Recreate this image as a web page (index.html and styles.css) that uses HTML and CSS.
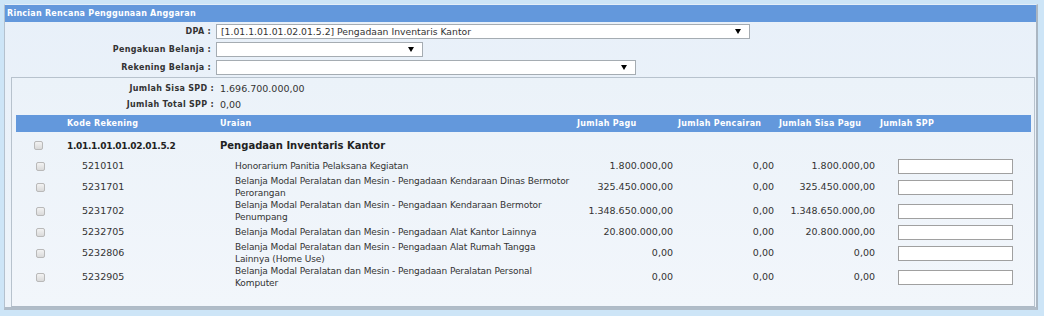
FILE: index.html
```html
<!DOCTYPE html>
<html>
<head>
<meta charset="utf-8">
<title>Rincian Rencana Penggunaan Anggaran</title>
<link rel="stylesheet" href="styles.css">
</head>
<body>
<div class="panel">
  <div class="panel-title">Rincian Rencana Penggunaan Anggaran</div>
  <div class="form">
    <div class="form-row">
      <span class="lbl">DPA :</span>
      <div class="select sel-dpa"><span class="sel-text">[1.01.1.01.01.02.01.5.2] Pengadaan Inventaris Kantor</span><svg class="caret" width="6" height="5" viewBox="0 0 6 5"><polygon points="0,0 6,0 3,5" fill="#000"/></svg></div>
    </div>
    <div class="form-row">
      <span class="lbl">Pengakuan Belanja :</span>
      <div class="select sel-pengakuan"><span class="sel-text"></span><svg class="caret" width="6" height="5" viewBox="0 0 6 5"><polygon points="0,0 6,0 3,5" fill="#000"/></svg></div>
    </div>
    <div class="form-row">
      <span class="lbl">Rekening Belanja :</span>
      <div class="select sel-rekening"><span class="sel-text"></span><svg class="caret" width="6" height="5" viewBox="0 0 6 5"><polygon points="0,0 6,0 3,5" fill="#000"/></svg></div>
    </div>
  </div>
  <div class="box">
    <div class="sum-row"><span class="lbl">Jumlah Sisa SPD :</span><span class="num">1.696.700.000,00</span></div>
    <div class="sum-row"><span class="lbl">Jumlah Total SPP :</span><span class="num">0,00</span></div>
    <table class="grid">
      <colgroup>
        <col class="c-chk"><col class="c-code"><col class="c-uraian"><col class="c-num"><col class="c-num"><col class="c-num"><col class="c-spp">
      </colgroup>
      <thead>
        <tr>
          <th></th>
          <th>Kode Rekening</th>
          <th>Uraian</th>
          <th>Jumlah Pagu</th>
          <th>Jumlah Pencairan</th>
          <th>Jumlah Sisa Pagu</th>
          <th>Jumlah SPP</th>
        </tr>
      </thead>
      <tbody>
        <tr class="group">
          <td><span class="chk chk-group"></span></td>
          <td class="code">1.01.1.01.01.02.01.5.2</td>
          <td class="uraian">Pengadaan Inventaris Kantor</td>
          <td></td><td></td><td></td><td></td>
        </tr>
        <tr class="item">
          <td><span class="chk"></span></td>
          <td class="code">5210101</td>
          <td class="uraian">Honorarium Panitia Pelaksana Kegiatan</td>
          <td class="num">1.800.000,00</td>
          <td class="num">0,00</td>
          <td class="num">1.800.000,00</td>
          <td><span class="spp-input"></span></td>
        </tr>
        <tr class="item">
          <td><span class="chk"></span></td>
          <td class="code">5231701</td>
          <td class="uraian">Belanja Modal Peralatan dan Mesin - Pengadaan Kendaraan Dinas Bermotor Perorangan</td>
          <td class="num">325.450.000,00</td>
          <td class="num">0,00</td>
          <td class="num">325.450.000,00</td>
          <td><span class="spp-input"></span></td>
        </tr>
        <tr class="item">
          <td><span class="chk"></span></td>
          <td class="code">5231702</td>
          <td class="uraian">Belanja Modal Peralatan dan Mesin - Pengadaan Kendaraan Bermotor Penumpang</td>
          <td class="num">1.348.650.000,00</td>
          <td class="num">0,00</td>
          <td class="num">1.348.650.000,00</td>
          <td><span class="spp-input"></span></td>
        </tr>
        <tr class="item">
          <td><span class="chk"></span></td>
          <td class="code">5232705</td>
          <td class="uraian">Belanja Modal Peralatan dan Mesin - Pengadaan Alat Kantor Lainnya</td>
          <td class="num">20.800.000,00</td>
          <td class="num">0,00</td>
          <td class="num">20.800.000,00</td>
          <td><span class="spp-input"></span></td>
        </tr>
        <tr class="item">
          <td><span class="chk"></span></td>
          <td class="code">5232806</td>
          <td class="uraian">Belanja Modal Peralatan dan Mesin - Pengadaan Alat Rumah Tangga<br>Lainnya (Home Use)</td>
          <td class="num">0,00</td>
          <td class="num">0,00</td>
          <td class="num">0,00</td>
          <td><span class="spp-input"></span></td>
        </tr>
        <tr class="item">
          <td><span class="chk"></span></td>
          <td class="code">5232905</td>
          <td class="uraian">Belanja Modal Peralatan dan Mesin - Pengadaan Peralatan Personal Komputer</td>
          <td class="num">0,00</td>
          <td class="num">0,00</td>
          <td class="num">0,00</td>
          <td><span class="spp-input"></span></td>
        </tr>
      </tbody>
    </table>
  </div>
</div>
</body>
</html>
```

FILE: styles.css
```css
* {
  box-sizing: border-box;
}

body {
  margin: 0;
  background: #cde5f7;
  font-family: "DejaVu Sans", Verdana, sans-serif;
  color: #333;
}

.panel {
  margin: 4px 0 0 4px;
  width: 1034px;
  background: linear-gradient(#e8f0f9, #eef4fa);
  border-style: solid;
  border-width: 1px 2px 3px 1px;
  border-color: #e3eef8 #aab6c2 #b0bcc8 #b4c1ce;
}

.panel-title {
  height: 17px;
  line-height: 17px;
  padding-left: 2px;
  background: #6398dc;
  color: #fff;
  font-weight: bold;
  font-size: 8px;
  letter-spacing: 0.25px;
}

.form {
  padding-top: 2px;
  display: flex;
  flex-direction: column;
  gap: 3px;
}

.form-row {
  display: grid;
  grid-template-columns: 206px auto;
  column-gap: 5px;
  justify-content: start;
  align-items: center;
  height: 15px;
}

.lbl {
  font-weight: bold;
  font-size: 8px;
  letter-spacing: 0.3px;
  text-align: right;
  color: #333;
}

.select {
  height: 15px;
  border: 1px solid #a5acb2;
  background: #fff;
  display: flex;
  align-items: center;
  justify-content: space-between;
  padding: 0 8px 0 4px;
  font-size: 9.25px;
  color: #333;
}

.sel-dpa { width: 534px; }
.sel-pengakuan { width: 207px; }
.sel-rekening { width: 420px; }

.caret {
  display: block;
  flex: none;
}

.box {
  margin: 2px 1px 0 6px;
  border: 1px solid #b7c2cd;
  border-bottom-color: #aebac6;
  background: linear-gradient(#ebf2f9, #f2f6fb);
  padding: 2px 0 17px 4px;
}

.sum-row {
  display: grid;
  grid-template-columns: 198px auto;
  column-gap: 6px;
  justify-content: start;
  align-items: center;
  height: 16px;
}

.sum-row .num {
  font-size: 9.5px;
}

.grid {
  margin-top: 3px;
  width: 1015px;
  table-layout: fixed;
  border-collapse: collapse;
  border-spacing: 0;
}

.c-chk { width: 46px; }
.c-code { width: 153px; }
.c-uraian { width: 357px; }
.c-num { width: 101px; }
.c-spp { width: 156px; }

.grid th {
  height: 17px;
  padding: 0 0 0 5px;
  background: #6398dc;
  color: #fff;
  font-weight: bold;
  font-size: 8px;
  letter-spacing: 0.3px;
  text-align: left;
  white-space: nowrap;
}

.grid td {
  padding: 0;
  vertical-align: middle;
  line-height: 12px;
}

.group td {
  height: 25px;
  padding-top: 2px;
  font-weight: bold;
  color: #222;
}

.group .code {
  padding-left: 5px;
  font-size: 9px;
  letter-spacing: -0.3px;
}

.group .uraian {
  padding-left: 5px;
  font-size: 10px;
}

.item td {
  height: 18px;
}

.item .code {
  padding-left: 20px;
  font-size: 9.5px;
}

.item .uraian {
  padding-left: 20px;
  font-size: 9px;
  letter-spacing: -0.1px;
}

.grid td.num {
  text-align: right;
  font-size: 9.5px;
  white-space: nowrap;
}

.chk {
  display: block;
  width: 9px;
  height: 9px;
  margin-left: 20px;
  border: 1px solid #b9b9b9;
  border-radius: 2px;
  background: linear-gradient(#f2f2f2, #dadada);
}

.chk-group {
  margin-left: 18px;
}

.spp-input {
  display: block;
  margin-left: 23px;
  width: 115px;
  height: 15px;
  border: 1px solid #a0a0a0;
  background: #fff;
}
```
